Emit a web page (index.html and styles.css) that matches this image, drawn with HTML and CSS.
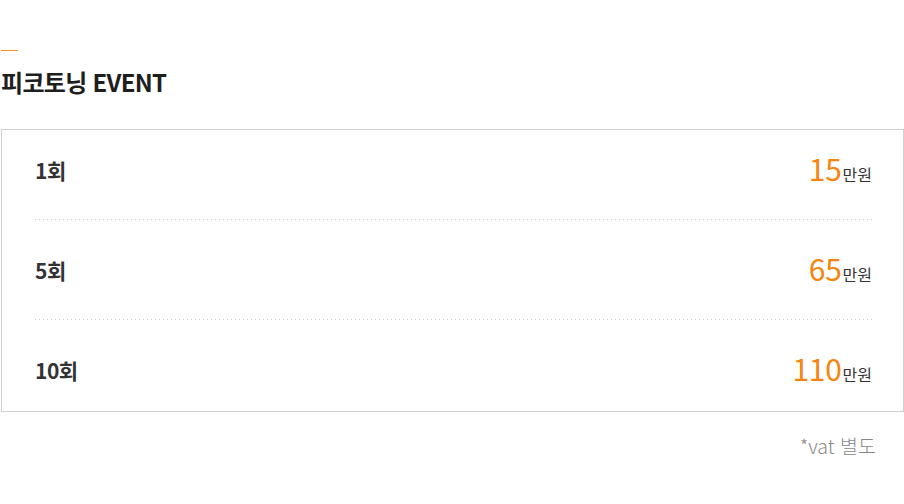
FILE: index.html
```html
<!DOCTYPE html>
<html lang="ko">
<head>
<meta charset="utf-8">
<link rel="stylesheet" href="styles.css">
</head>
<body>
<div class="wrap">
  <div class="accent"></div>
  <h2 class="title">피코토닝 EVENT</h2>
  <ul class="price-list">
    <li class="row"><span class="label">1회</span><span class="price"><span class="num">15</span><span class="unit">만원</span></span></li>
    <li class="row"><span class="label">5회</span><span class="price"><span class="num">65</span><span class="unit">만원</span></span></li>
    <li class="row"><span class="label">10회</span><span class="price"><span class="num">110</span><span class="unit">만원</span></span></li>
  </ul>
  <p class="note">*vat 별도</p>
</div>
</body>
</html>
```
FILE: styles.css
```css
html, body {
  margin: 0;
  padding: 0;
  background: #fff;
}
body {
  font-family: "Noto Sans CJK KR", "Noto Sans", sans-serif;
  color: #222;
}
.wrap {
  margin-left: 1px;
  width: 903px;
  padding-top: 50px;
}
.accent {
  width: 17px;
  height: 1px;
  background: #f7931e;
}
.title {
  margin: 14px 0 0;
  font-size: 24px;
  font-weight: 700;
  line-height: 34px;
  color: #1e1e1e;
  letter-spacing: -0.7px;
}
.price-list {
  list-style: none;
  margin: 30px 0 0;
  padding: 0 31px 0 33px;
  border: 1px solid #cfcfcf;
}
.row {
  display: flex;
  justify-content: space-between;
  align-items: center;
  height: 20px;
  padding: 40px 0 40px;
  background-image: repeating-linear-gradient(to right, #cfcfcf 0 1px, transparent 1px 4px);
  background-size: 100% 1px;
  background-repeat: no-repeat;
  background-position: left bottom;
}
.row:first-child {
  padding-top: 30px;
}
.row:last-child {
  padding-bottom: 31px;
  background-image: none;
}
.label {
  font-size: 21px;
  font-weight: 700;
  color: #333;
  letter-spacing: -0.5px;
}
.price {
  display: flex;
  align-items: baseline;
  margin-bottom: 4px;
}
.num {
  font-size: 30px;
  color: #f7840f;
  letter-spacing: -0.3px;
}
.unit {
  font-size: 16px;
  color: #333;
  margin-left: 1px;
}
.note {
  margin: 19px 28px 0 0;
  text-align: right;
  font-size: 19.5px;
  font-weight: 300;
  color: #888;
}
```
